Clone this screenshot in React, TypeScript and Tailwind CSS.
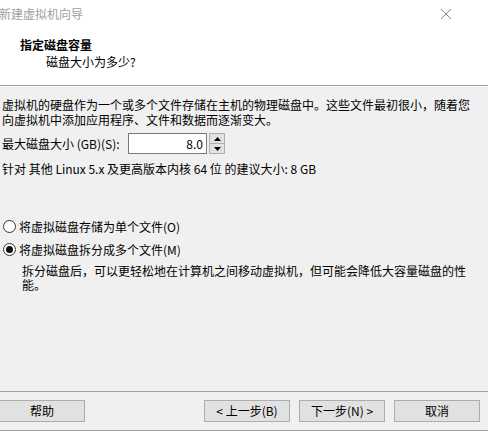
import { useState } from 'react'

const font = { fontFamily: '"Noto Sans CJK SC", "Liberation Sans", sans-serif' }

function Radio({ checked, label, onClick }: { checked: boolean; label: string; onClick: () => void }) {
  return (
    <div className="flex items-center h-[15px] cursor-default" onClick={onClick}>
      <span className="w-[13px] h-[13px] rounded-full border border-[#333] bg-white flex items-center justify-center ml-[1px] mr-[3px]">
        {checked && <span className="w-[7px] h-[7px] rounded-full bg-[#111]" />}
      </span>
      <span>{label}</span>
    </div>
  )
}

function Btn({ children, className = '' }: { children: React.ReactNode; className?: string }) {
  return (
    <button
      className={`h-[22px] w-[86px] bg-[#e1e1e1] border border-[#adadad] text-[12px] leading-none text-black ${className}`}
    >
      {children}
    </button>
  )
}

export default function App() {
  const [split, setSplit] = useState(true)
  const [size, setSize] = useState(8)

  return (
    <div className="w-[488px] h-[431px] bg-[#f0f0f0] flex flex-col text-[12px] text-black overflow-hidden" style={font}>
      {/* 头部 */}
      <div className="bg-white h-[85px] shrink-0">
        <div className="h-[28px] flex items-center justify-between pr-[36px]">
          <span className="text-[#a0a0a0] -ml-[1px]">新建虚拟机向导</span>
          <svg width="12" height="12" viewBox="0 0 12 12" className="text-[#888]">
            <path d="M1 1 L11 11 M11 1 L1 11" stroke="currentColor" strokeWidth="1" />
          </svg>
        </div>
        <div className="pl-[20px] pt-[9px] font-bold leading-[15px]">指定磁盘容量</div>
        <div className="pl-[46px] pt-[2px] leading-[15px]">磁盘大小为多少?</div>
      </div>
      <div className="h-[1px] bg-[#a0a0a0] shrink-0" />
      <div className="h-[1px] bg-white shrink-0" />

      {/* 内容 */}
      <div className="flex-1 pl-[2px] pt-[10px] leading-[15px]">
        <p>
          虚拟机的硬盘作为一个或多个文件存储在主机的物理磁盘中。这些文件最初很小，随着您
          <br />
          向虚拟机中添加应用程序、文件和数据而逐渐变大。
        </p>

        <div className="flex items-center mt-[6px] h-[21px]">
          <span className="w-[126px]">最大磁盘大小 (GB)(S):</span>
          <div className="w-[79px] h-[21px] bg-white border border-[#7a7a7a] flex items-center justify-end pr-[3px]">
            {size.toFixed(1)}
          </div>
          <div className="ml-[2px] w-[16px] h-[21px] border border-[#adadad] flex flex-col bg-[#e1e1e1]">
            <button
              className="flex-1 flex items-center justify-center border-b border-[#adadad]"
              onClick={() => setSize(size + 1)}
            >
              <svg width="7" height="4" viewBox="0 0 7 4"><path d="M0 4 L3.5 0 L7 4 Z" fill="#000" /></svg>
            </button>
            <button className="flex-1 flex items-center justify-center" onClick={() => setSize(Math.max(1, size - 1))}>
              <svg width="7" height="4" viewBox="0 0 7 4"><path d="M0 0 L7 0 L3.5 4 Z" fill="#000" /></svg>
            </button>
          </div>
        </div>

        <p className="mt-[7px]">针对 其他 Linux 5.x 及更高版本内核 64 位 的建议大小: 8 GB</p>

        <div className="mt-[43px] flex flex-col gap-[8px]">
          <Radio checked={!split} label="将虚拟磁盘存储为单个文件(O)" onClick={() => setSplit(false)} />
          <Radio checked={split} label="将虚拟磁盘拆分成多个文件(M)" onClick={() => setSplit(true)} />
        </div>
        <p className="pl-[20px] mt-[7px] leading-[14px]">
          拆分磁盘后，可以更轻松地在计算机之间移动虚拟机，但可能会降低大容量磁盘的性
          <br />
          能。
        </p>
      </div>

      {/* 底部 */}
      <div className="h-[1px] bg-[#a0a0a0] shrink-0" />
      <div className="h-[38px] flex items-center shrink-0 pb-[1px]">
        <Btn className="w-[85px] -ml-[1px]">帮助</Btn>
        <div className="flex-1" />
        <Btn>&lt; 上一步(B)</Btn>
        <Btn className="ml-[9px]">下一步(N) &gt;</Btn>
        <Btn className="ml-[9px] mr-[8px]">取消</Btn>
      </div>
      <div className="h-[1px] bg-[#a0a0a0] shrink-0" />
    </div>
  )
}
